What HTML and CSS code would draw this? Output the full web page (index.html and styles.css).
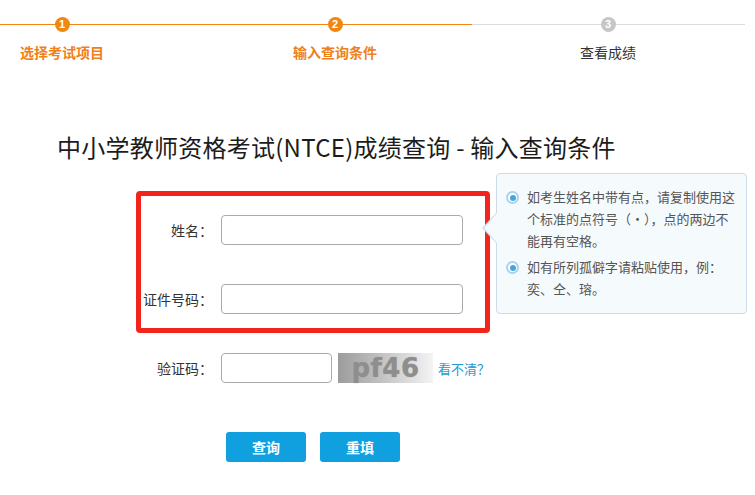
FILE: index.html
```html
<!DOCTYPE html>
<html lang="zh-CN">
<head>
<meta charset="utf-8">
<title>成绩查询</title>
<link rel="stylesheet" href="styles.css">
</head>
<body>
<div class="steps">
  <div class="step done">
    <span class="num">1</span>
    <div class="step-label">选择考试项目</div>
  </div>
  <div class="step done">
    <span class="num">2</span>
    <div class="step-label">输入查询条件</div>
  </div>
  <div class="step todo">
    <span class="num">3</span>
    <div class="step-label">查看成绩</div>
  </div>
</div>

<h1 class="title">中小学教师资格考试(NTCE)成绩查询 - 输入查询条件</h1>

<div class="form-area">
  <div class="form-col">
    <div class="highlight">
      <div class="row">
        <label class="lbl">姓名：</label>
        <input class="inp" type="text">
      </div>
      <div class="row row-gap">
        <label class="lbl">证件号码：</label>
        <input class="inp" type="text">
      </div>
    </div>
    <div class="row captcha-row">
      <label class="lbl">验证码：</label>
      <input class="inp inp-short" type="text">
      <div class="captcha">pf46</div>
      <a class="refresh" href="#">看不清？</a>
    </div>
    <div class="buttons">
      <button class="btn" type="button">查询</button>
      <button class="btn" type="button">重填</button>
    </div>
  </div>
  <div class="tip">
    <div class="tip-item">
      <span class="dot"></span>
      <p>如考生姓名中带有点，请复制使用这个标准的点符号（·），点的两边不能再有空格。</p>
    </div>
    <div class="tip-item">
      <span class="dot"></span>
      <p>如有所列孤僻字请粘贴使用，例：奕、仝、瑢。</p>
    </div>
  </div>
</div>
</body>
</html>
```

FILE: styles.css
```css
* { box-sizing: border-box; }

body {
  margin: 0;
  background: #fff;
  font-family: "Noto Sans CJK SC", "Microsoft YaHei", "Noto Sans", sans-serif;
  color: #333;
  overflow: hidden;
}

/* steps */
.steps {
  display: flex;
  margin-left: -74.5px;
  height: 62px;
}
.step {
  flex: none;
  width: 273px;
  padding-top: 17px;
  text-align: center;
  background-repeat: no-repeat;
  background-position: 0 24px;
  background-size: 100% 1px;
}
.step.done { background-image: linear-gradient(#f0870f, #f0870f); }
.step.todo { background-image: linear-gradient(#dcdcdc, #dcdcdc); }

.num {
  display: block;
  margin: 0 auto;
  width: 15px;
  height: 15px;
  border-radius: 50%;
  color: #fff;
  font-family: "Liberation Sans", Arial, sans-serif;
  font-weight: bold;
  font-size: 11px;
  line-height: 15px;
  text-align: center;
}
.done .num { background: #f0870f; }
.todo .num { background: #c6c6c6; }

.step-label {
  margin-top: 10px;
  font-size: 14px;
  line-height: 20px;
}
.done .step-label { color: #f0801a; font-weight: bold; }
.todo .step-label { color: #333; }

/* title */
.title {
  margin: 69px 0 0 57px;
  font-size: 24px;
  line-height: 32px;
  font-weight: normal;
  color: #1c1c1c;
  letter-spacing: 0.25px;
  white-space: nowrap;
}

/* form */
.form-area {
  display: flex;
  align-items: flex-start;
  margin-top: 10px;
  padding-left: 136px;
}
.form-col {
  width: 354px;
  flex: none;
}
.highlight {
  margin-top: 18px;
  border: 5px solid #f2241c;
  border-radius: 4px;
  padding: 19px 0 14px 0;
  height: 142px;
}
.row {
  display: flex;
  align-items: center;
}
.row-gap { margin-top: 39px; }

.lbl {
  width: 72px;
  flex: none;
  margin-right: 8px;
  text-align: right;
  font-size: 14px;
  color: #333;
  white-space: nowrap;
}
.inp {
  width: 242px;
  height: 30px;
  border: 1px solid #aaa;
  border-radius: 4px;
  background: #fff;
  padding: 0 6px;
  font: inherit;
}
.inp-short { width: 111px; }

.captcha-row {
  margin-top: 20px;
  padding-left: 5px;
}
.captcha {
  margin-left: 6px;
  width: 95px;
  height: 30px;
  background: linear-gradient(90deg, #9c9c9c 0%, #c6c6c6 50%, #f4f4f4 100%);
  color: #8e8e8e;
  font-family: "DejaVu Sans", sans-serif;
  font-weight: bold;
  font-size: 26px;
  line-height: 30px;
  text-align: center;
  letter-spacing: 0.5px;
  text-shadow: 0 0 1px #9a9a9a;
}
.refresh {
  margin-left: 5px;
  color: #1a9ad6;
  font-size: 13px;
  text-decoration: none;
}

.buttons {
  display: flex;
  gap: 14px;
  margin: 49px 0 0 90px;
}
.btn {
  width: 80px;
  height: 30px;
  border: none;
  border-radius: 3px;
  background: #10a0e0;
  color: #fff;
  font-family: inherit;
  font-size: 14px;
  font-weight: bold;
  padding: 0;
}

/* tooltip */
.tip {
  position: relative;
  margin-left: 6px;
  width: 251px;
  height: 141px;
  flex: none;
  background: #f5fafd;
  border: 1px solid #cbdbe8;
  border-radius: 4px;
  padding: 12px 8px 0 9px;
}
.tip::before,
.tip::after {
  content: "";
  position: absolute;
  top: 39px;
  width: 0;
  height: 0;
  border-top: 15px solid transparent;
  border-bottom: 15px solid transparent;
}
.tip::before {
  left: -15px;
  border-right: 14px solid #cbdbe8;
}
.tip::after {
  left: -13px;
  border-right: 13px solid #f5fafd;
}
.tip-item {
  display: flex;
  align-items: flex-start;
}
.tip-item + .tip-item { margin-top: 4px; }
.tip-item p {
  margin: 0;
  width: 212px;
  font-size: 13px;
  line-height: 22px;
  color: #555;
}
.dot {
  flex: none;
  width: 13px;
  height: 13px;
  margin: 5px 8px 0 0;
  border-radius: 50%;
  border: 2px solid #a6d4ee;
  background: #fff;
  display: flex;
  align-items: center;
  justify-content: center;
}
.dot::after {
  content: "";
  width: 6px;
  height: 6px;
  border-radius: 50%;
  background: #45a6d8;
}
```
